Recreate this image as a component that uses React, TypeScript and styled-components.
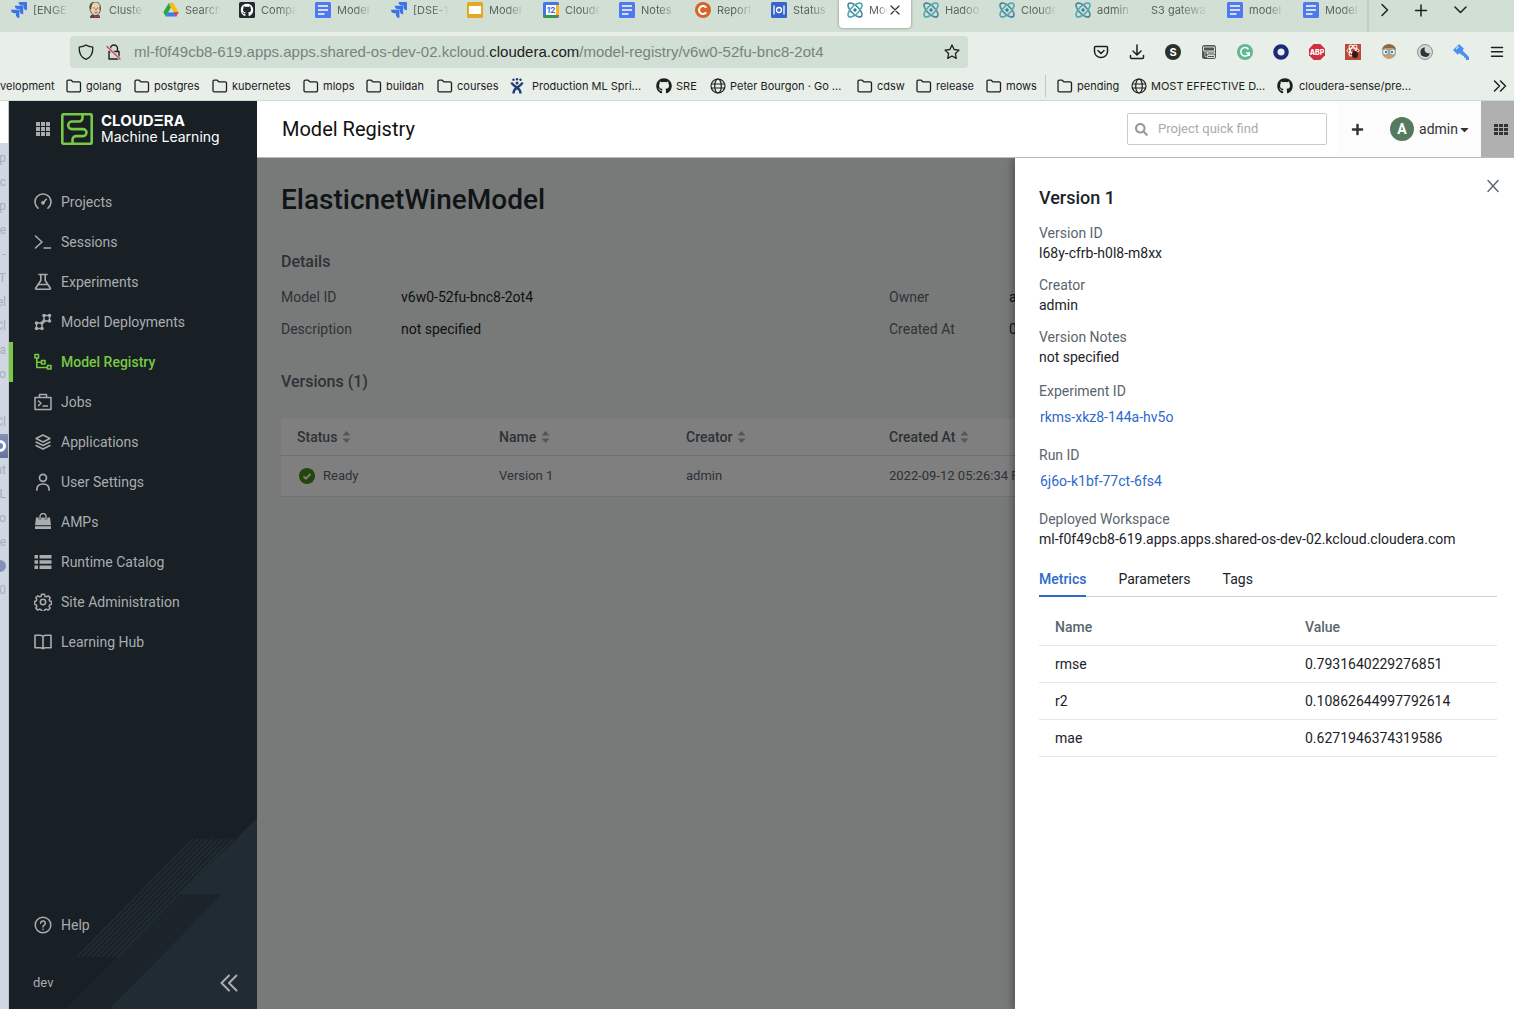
import React from "react";
import styled, { createGlobalStyle, css } from "styled-components";
import { FaGithub, FaSearch, FaPlus, FaCaretDown } from "react-icons/fa";

const GlobalStyle = createGlobalStyle`
  *, *::before, *::after { box-sizing: border-box; }
  body { margin: 0; font-family: Roboto, "Liberation Sans", sans-serif; font-size: 14px; line-height: 20px; color: #1b2329; }
  button, input { font: inherit; color: inherit; }
  button { border: 0; background: none; padding: 0; cursor: pointer; }
  h1, h2, h3, dl, dd, p, ul { margin: 0; padding: 0; }
  ul { list-style: none; }
  a { text-decoration: none; color: inherit; }
  svg { display: block; flex: none; }
`;

const Page = styled.div`
  display: flex;
  flex-direction: column;
  height: 100vh;
  overflow: hidden;
`;

/* ---------- browser chrome ---------- */

const Chrome = styled.header`
  flex: none;
  background: #e8efe8;
  border-bottom: 1px solid #cddcd1;
  font-family: Inter, "Liberation Sans", sans-serif;
  font-size: 11px;
  line-height: 16px;
  color: #1c211e;
`;

const TabStrip = styled.nav`
  display: flex;
  height: 32px;
  padding-left: 3px;
  background: #d1dfd5;
`;

const BrowserTab = styled.a<{ $active?: boolean }>`
  display: flex;
  align-items: center;
  flex: none;
  gap: 6px;
  width: 72px;
  height: 28px;
  margin-right: 4px;
  padding: 0 6px 8px 8px;
  color: #5c655f;
  ${(p) =>
    p.$active &&
    css`
      padding-right: 11px;
      background: #fff;
      border-radius: 0 0 4px 4px;
      box-shadow: 0 0 3px rgba(0, 0, 0, 0.4);
    `}
`;

const TabLabel = styled.span`
  flex: 1;
  overflow: hidden;
  white-space: nowrap;
  mask-image: linear-gradient(to right, #000 50%, transparent 100%);
`;

const TabClose = styled.span`
  margin-left: -4px;
  color: #333;
`;

const StripControls = styled.div`
  display: flex;
  align-items: flex-start;
  gap: 21px;
  height: 32px;
  margin-left: -4px;
  padding: 2px 0 0 8px;
  border-left: 2px solid #c0cdc4;
`;

const Toolbar = styled.div`
  display: flex;
  align-items: center;
  height: 40px;
  padding: 0 9px 0 70px;
`;

const AddressBar = styled.div`
  display: flex;
  align-items: center;
  flex: 1;
  min-width: 0;
  height: 32px;
  margin-right: 125px;
  padding: 0 8px;
  gap: 12px;
  background: #d1dfd5;
  border-radius: 4px;
`;

const Address = styled.div`
  flex: 1;
  overflow: hidden;
  white-space: nowrap;
  font-family: "Liberation Sans", Arial, sans-serif;
  font-size: 15px;
  line-height: 20px;
  color: #78837c;
  b {
    font-weight: 400;
    color: #1c211e;
  }
`;

const Extensions = styled.div`
  display: flex;
  gap: 20px;
`;

const Bookmarks = styled.nav`
  display: flex;
  align-items: center;
  height: 28px;
  padding-right: 6px;
`;

const Bookmark = styled.a<{ $width: number; $gap?: number }>`
  display: flex;
  align-items: center;
  flex: none;
  gap: ${(p) => p.$gap ?? 4}px;
  width: ${(p) => p.$width}px;
  white-space: nowrap;
`;

const BookmarkRule = styled.span`
  width: 1px;
  height: 22px;
  margin-right: 11px;
  background: #bccabf;
`;

const Overflow = styled.button`
  margin-left: auto;
`;

/* ---------- app shell ---------- */

const Shell = styled.div`
  display: flex;
  flex: 1;
  min-height: 0;
`;

const BackWindow = styled.ul`
  flex: none;
  width: 9px;
  overflow: hidden;
  && {
    padding-top: 45px;
  }
  border-right: 1px solid #bfc5cb;
  background: linear-gradient(#fff 42px, #d0d7e2 42px);
  font-size: 12px;
  line-height: 24px;
  color: #a7adb8;
`;

const BackRow = styled.li<{ $selected?: boolean }>`
  display: flex;
  align-items: center;
  justify-content: flex-end;
  height: 24px;
  padding-right: 2px;
  white-space: nowrap;
  ${(p) => p.$selected && "background: linear-gradient(#8490b8, #66739f);"}
`;

const BackBadge = styled.span<{ $light?: boolean }>`
  flex: none;
  width: 12px;
  height: 12px;
  border: ${(p) => (p.$light ? "3px solid #fff" : "6px solid #8390b8")};
  border-radius: 6px;
`;

const Sidebar = styled.aside`
  position: relative;
  display: flex;
  flex-direction: column;
  flex: none;
  width: 248px;
  background: #181f25;
  color: #a9adb0;
`;

const SidebarArt = styled.svg`
  position: absolute;
  right: 0;
  bottom: 0;
`;

const Brand = styled.div`
  display: flex;
  align-items: center;
  gap: 8px;
  height: 56px;
  padding-left: 27px;
  color: #fff;
`;

const AppsButton = styled.button`
  width: 17px;
  color: #a9adb0;
`;

const BrandName = styled.span`
  display: flex;
  flex-direction: column;
  font-family: Inter, sans-serif;
  font-size: 14px;
  line-height: 16px;
  b {
    font-size: 15px;
    font-weight: 700;
  }
`;

const NavList = styled.ul`
  && {
    padding-top: 25px;
  }
`;

const NavLink = styled.a<{ $active?: boolean }>`
  position: relative;
  display: flex;
  align-items: center;
  gap: 9px;
  height: 40px;
  padding-left: 21px;
  border-left: 4px solid ${(p) => (p.$active ? "#78c943" : "transparent")};
  color: ${(p) => (p.$active ? "#78c943" : "inherit")};
  font-weight: ${(p) => (p.$active ? 500 : 400)};
`;

const SidebarFoot = styled.div`
  position: relative;
  margin-top: auto;
`;

const FootRow = styled.div`
  display: flex;
  align-items: center;
  justify-content: space-between;
  height: 64px;
  padding: 12px 19px 0 24px;
  font-size: 13px;
`;

const Workspace = styled.div`
  display: flex;
  flex-direction: column;
  flex: 1;
  min-width: 0;
`;

const TopBar = styled.div`
  display: flex;
  align-items: center;
  flex: none;
  height: 57px;
  padding-left: 25px;
  background: #fff;
  border-bottom: 1px solid #b9bbbb;
`;

const PageTitle = styled.h2`
  flex: 1;
  font-size: 20px;
  line-height: 28px;
  font-weight: 400;
  color: #111;
`;

const SearchBox = styled.label`
  display: flex;
  align-items: center;
  gap: 10px;
  width: 200px;
  height: 32px;
  margin-right: 10px;
  padding: 0 7px;
  border: 1px solid #ccc;
  border-radius: 2px;
  color: #999;
  input {
    width: 100%;
    min-width: 0;
    padding: 0;
    border: 0;
    outline: 0;
    background: none;
    font-size: 13px;
    color: #333;
  }
  input::placeholder {
    color: #aaa;
    opacity: 1;
  }
`;

const UserArea = styled.div`
  display: flex;
  align-items: center;
  gap: 26px;
  height: 56px;
  padding: 0 10px 0 14px;
  background: #fcfcfc;
  color: #333;
`;

const UserButton = styled.button`
  display: flex;
  align-items: center;
`;

const Avatar = styled.span`
  width: 24px;
  margin-right: 5px;
  border-radius: 12px;
  background: #567a60;
  color: #fff;
  font-weight: 700;
  line-height: 24px;
  text-align: center;
`;

const PanelButton = styled.button`
  display: flex;
  align-items: center;
  justify-content: flex-end;
  width: 33px;
  height: 56px;
  padding-right: 6px;
  background: #b0b0b0;
  color: #333;
`;

/* ---------- model page ---------- */

const Stage = styled.div`
  position: relative;
  flex: 1;
  min-height: 0;
  overflow: hidden;
  background: #f1f5f3;
`;

const Model = styled.main`
  padding: 22px 17px 0 24px;
`;

const ModelName = styled.h1`
  font-size: 28px;
  line-height: 40px;
  font-weight: 500;
  color: #23292e;
`;

const SectionTitle = styled.h3`
  margin-top: 30px;
  font-size: 16px;
  line-height: 24px;
  font-weight: 500;
  color: #5a656d;
`;

const Details = styled.dl`
  display: grid;
  grid-template-columns: 1fr 1fr;
  row-gap: 12px;
  && {
    padding: 13px 0 1px;
  }
`;

const Detail = styled.div`
  display: flex;
  dt {
    width: 120px;
    color: #5a656d;
  }
`;

const VersionTable = styled.table`
  width: 100%;
  margin-top: 25px;
  border-collapse: collapse;
  table-layout: fixed;
  background: #fff;
  color: #5a656d;
  th,
  td {
    padding: 0 16px;
    text-align: left;
    border-bottom: 1px solid #dde2e2;
    white-space: nowrap;
  }
  th {
    height: 36px;
    font-weight: 500;
  }
  td {
    height: 41px;
    font-size: 13px;
  }
`;

const SortButton = styled.button`
  display: flex;
  align-items: center;
  gap: 5px;
  font-weight: 500;
`;

const Ready = styled.span`
  display: flex;
  align-items: center;
  gap: 7px;
  padding-left: 1px;
`;

const Scrim = styled.div`
  position: absolute;
  inset: 0;
  background: rgba(0, 0, 0, 0.5);
`;

const Drawer = styled.section`
  position: absolute;
  top: 0;
  right: 0;
  bottom: 0;
  width: 499px;
  padding: 28px 17px 0 24px;
  background: #fff;
  box-shadow: -2px 0 8px rgba(0, 0, 0, 0.35);
`;

const DrawerTitle = styled.h2`
  margin-bottom: 13px;
  font-size: 18px;
  line-height: 24px;
  font-weight: 500;
`;

const CloseButton = styled.button`
  position: absolute;
  top: 20px;
  right: 13px;
  color: #5a656d;
`;

const Fields = styled.dl`
  display: flex;
  flex-direction: column;
  gap: 12px;
  & + & {
    margin-top: 14px;
  }
  dt {
    color: #5a656d;
  }
`;

const FieldLink = styled.a`
  display: block;
  padding-left: 1px;
  line-height: 32px;
  color: #2e69cc;
`;

const Tabs = styled.div`
  display: flex;
  gap: 32px;
  margin-top: 20px;
  box-shadow: inset 0 -1px #cdd0d3;
`;

const Tab = styled.button<{ $active?: boolean }>`
  padding-bottom: 6px;
  border-bottom: 2px solid ${(p) => (p.$active ? "#2e69cc" : "transparent")};
  font-weight: ${(p) => (p.$active ? 500 : 400)};
  color: ${(p) => (p.$active ? "#2e69cc" : "inherit")};
`;

const MetricTable = styled.table`
  width: 100%;
  margin-top: 12px;
  border-collapse: collapse;
  table-layout: fixed;
  th,
  td {
    height: 37px;
    padding: 0 16px;
    text-align: left;
    border-bottom: 1px solid #e4e6e8;
  }
  th {
    height: 36px;
    font-weight: 500;
    color: #5a656d;
  }
`;

/* ---------- drawings ---------- */

const Jira = () => (
  <svg width="16" height="16" viewBox="0 0 24 24" fill="#3b73e8">
    <path d="M11.57 11.51H0a5.22 5.22 0 0 0 5.23 5.22h2.13v2.06A5.22 5.22 0 0 0 12.58 24V12.52a1 1 0 0 0-1-1z" />
    <path d="M17.3 5.76H5.74a5.22 5.22 0 0 0 5.21 5.21h2.13v2.06a5.22 5.22 0 0 0 5.22 5.21V6.76a1 1 0 0 0-1-1z" />
    <path d="M23.01 0H11.46a5.22 5.22 0 0 0 5.21 5.22h2.13v2.05A5.22 5.22 0 0 0 24 12.48V1a1 1 0 0 0-1-1z" />
  </svg>
);

const Jenkins = () => (
  <svg width="16" height="16" viewBox="0 0 16 16">
    <path d="M3 16c0-3 2-4 5-4s5 1 5 4z" fill="#3e4a55" />
    <path d="M3 6c0-4 2-6 5-6 3.500 0 5.500 2 5.500 6S11.500 13.500 8.500 13.500 3 10 3 6z" fill="#eccfae" stroke="#4d4038" strokeWidth=".8" />
    <path d="M3 7C1.500 3 4 0 7 .3 5 1.500 4.500 4 4.300 7zM12.500 4c1 1 1.300 3 .8 5l-1-2z" fill="#5c4b40" />
    <path d="M6.500 6h1M10 6h1M7.500 10.300c1 .7 2 .6 3 0M9 6.500v2" stroke="#4d4038" strokeWidth=".9" fill="none" />
    <path d="M7 13l2.500 1.200L12.500 13v3l-3-1-2.500 1z" fill="#c9302c" />
  </svg>
);

const Drive = () => (
  <svg width="16" height="16" viewBox="0 0 16 16">
    <path d="M5.500 1.500h5l-5.200 9L2.800 14.500.3 10.300z" fill="#2ba24c" />
    <path d="M5.500 1.500h5l5.200 9h-5z" fill="#fbbc05" />
    <path d="M5.300 10.300h10.400L13.200 14.500H2.800z" fill="#3c7ded" />
    <path d="M10.700 10.300h5L13.200 14.500z" fill="#ea4335" />
    <path d="M8 5.800l2.700 4.500H5.300z" fill="#d1dfd5" />
  </svg>
);

const GithubTile = () => (
  <svg width="16" height="16" viewBox="0 0 16 16">
    <rect width="16" height="16" rx="1.500" fill="#24292e" />
    <g transform="translate(1.500 1.500)" color="#fff">
      <FaGithub size={13} />
    </g>
  </svg>
);

const Doc = () => (
  <svg width="16" height="16" viewBox="0 0 16 16">
    <rect width="16" height="16" rx="1.500" fill="#4f79ee" />
    <path d="M3 4h10M3 8h10M3 12h6.500" stroke="#fff" strokeWidth="1.700" />
  </svg>
);

const Slides = () => (
  <svg width="16" height="16" viewBox="0 0 16 16">
    <rect width="16" height="16" rx="1.500" fill="#e2a924" />
    <rect x="2" y="4" width="12" height="8" fill="#fff" />
  </svg>
);

const CalendarIcon = () => (
  <svg width="16" height="16" viewBox="0 0 16 16">
    <rect width="16" height="16" rx="1.500" fill="#3f78e8" />
    <path d="M13 3h3v10h-3z" fill="#f6b91b" />
    <path d="M0 13h13v3H1.500L0 14.500z" fill="#2f9a4d" />
    <path d="M13 13h3l-3 3z" fill="#e24a3b" />
    <rect x="3" y="3" width="10" height="10" fill="#fff" />
    <text x="8" y="11" fontSize="8" fontWeight="700" textAnchor="middle" fill="#3f68d8">12</text>
  </svg>
);

const Confluent = () => (
  <svg width="16" height="16" viewBox="0 0 16 16">
    <circle cx="8" cy="8" r="8" fill="#d6652b" />
    <path d="M11.300 5.700a4 4 0 1 0 0 4.600" fill="none" stroke="#fff" strokeWidth="2" />
  </svg>
);

const StatusTile = () => (
  <svg width="16" height="16" viewBox="0 0 16 16">
    <rect width="16" height="16" rx="1.500" fill="#3765cc" />
    <circle cx="8" cy="8" r="2.500" fill="none" stroke="#fff" strokeWidth="1.300" />
    <path d="M3 3.500v9M13 3.500v9" stroke="#fff" strokeWidth="1.300" />
  </svg>
);

const Atom = () => (
  <svg width="16" height="16" viewBox="0 0 16 16" fill="none" strokeWidth="1.500">
    <ellipse cx="8" cy="8" rx="9" ry="4" transform="rotate(45 8 8)" stroke="#3f7f9c" />
    <ellipse cx="8" cy="8" rx="9" ry="4" transform="rotate(-45 8 8)" stroke="#4aa5ad" />
    <path d="M5 1.500L8 4l3-2.500M5 14.500L8 12l3 2.500M1.500 5L4 8l-2.500 3M14.500 5L12 8l2.500 3" stroke="#5fb3b6" strokeWidth="1" />
    <circle cx="8" cy="8" r="1.700" fill="#3a7c98" />
  </svg>
);

type LineProps = { size?: number; w?: number; children: React.ReactNode };
const Line = ({ size = 16, w = 1.4, children }: LineProps) => (
  <svg width={size} height={size} viewBox={`0 0 ${size} ${size}`} fill="none" stroke="currentColor" strokeWidth={w} strokeLinecap="round" strokeLinejoin="round">
    {children}
  </svg>
);

const Folder = () => (
  <Line w={1.3}>
    <path d="M1 12.500V3.500a1.300 1.300 0 0 1 1.300-1.300h2.900l1.600 1.600h6.400a1.300 1.300 0 0 1 1.300 1.300v7.400a1.300 1.300 0 0 1-1.300 1.300H2.300A1.300 1.300 0 0 1 1 12.500z" />
  </Line>
);

const Globe = () => (
  <Line w={1.2}>
    <circle cx="8" cy="8" r="7" />
    <ellipse cx="8" cy="8" rx="3.300" ry="7" />
    <path d="M1.500 6h13M1.500 10h13" />
  </Line>
);

const JiraOld = () => (
  <svg width="16" height="16" viewBox="0 0 16 16" fill="none" stroke="#233a78" strokeWidth="2.400">
    <path d="M2.500 4.500c.5 2 2.500 3 5.500 5 2.500 1.700 3.500 3.500 3.500 6M13.500 4.500c-.5 2-2.500 3-5.500 5-2.500 1.700-3.500 3.500-3.500 6" />
    <g fill="#233a78" stroke="none">
      <circle cx="4.500" cy="1.800" r="1.200" />
      <circle cx="8" cy="1.200" r="1.200" />
      <circle cx="11.500" cy="1.800" r="1.200" />
      <circle cx="8" cy="5" r="1.500" />
    </g>
  </svg>
);

const Shield = () => (
  <Line w={1.3}>
    <path d="M8 1C6 2.500 3.500 3 1.200 3.200 1 8.500 3 13.500 8 15.300c5-1.800 7-6.800 6.800-12.100C12.500 3 10 2.500 8 1z" />
  </Line>
);

const Unlocked = () => (
  <Line w={1.4}>
    <path d="M4.500 7.500V4.500a3.500 3.500 0 0 1 7 0v3M3 7.500h10v7.500H3z" />
    <path d="M1 2.500l13 12.500" stroke="#d1dfd5" strokeWidth="3" />
    <path d="M1 2.500l13 12.500" stroke="#d9415a" />
  </Line>
);

const Star = () => (
  <Line w={1.3}>
    <path d="M8 1l2.100 4.500 4.900.6-3.600 3.400.9 4.900L8 12l-4.300 2.400.9-4.900L1 6.100l4.900-.6z" />
  </Line>
);

const Grid9 = () => (
  <svg width="14" height="14" viewBox="0 0 14 14" fill="currentColor">
    {[0, 5, 10].map((y) => [0, 5, 10].map((x) => <rect key={`${x}-${y}`} x={x} y={y} width="4" height="4" />))}
  </svg>
);

const Grid9Wide = () => (
  <svg width="14" height="11" viewBox="0 0 14 11" fill="currentColor">
    {[0, 4, 8].map((y) => [0, 5, 10].map((x) => <rect key={`${x}-${y}`} x={x} y={y} width="4" height="3" />))}
  </svg>
);

const ClouderaMark = () => (
  <svg width="32" height="32" viewBox="0 0 32 32" fill="none" stroke="#78c943" strokeWidth="2.600">
    <rect x="1.300" y="1.300" width="29.400" height="29.400" rx="1" />
    <path d="M21.500 1.500v3.500a3.500 3.500 0 0 1-3.500 3.500h-7a3.800 3.800 0 0 0 0 7.600h11a3.500 3.500 0 0 1 3.500 3.500v0a3.500 3.500 0 0 1-3.500 3.500h-7a3.500 3.500 0 0 0-3.500 3.500v4" />
  </svg>
);

const navIcons: Record<string, React.ReactNode> = {
  Projects: (
    <Line size={18} w={1.6}>
      <path d="M4 15.200a8 8 0 1 1 10 0M9.500 9.300l2.800-3" />
      <circle cx="9" cy="9.800" r="1.100" fill="currentColor" />
    </Line>
  ),
  Sessions: (
    <Line size={18} w={1.6}>
      <path d="M1.500 3l6.500 6-6.500 6M10 15h6.500" />
    </Line>
  ),
  Experiments: (
    <Line size={18} w={1.6}>
      <path d="M5 1.500h8M6.800 1.500v6L1.800 15c-.5.800-.2 1.200.5 1.200h13.400c.7 0 1-.4.500-1.200l-5-7.500v-6M5 11.500h8" />
    </Line>
  ),
  "Model Deployments": (
    <Line size={18} w={1.4}>
      <path d="M10 2.500h5.500V8H10zM2.500 10H8v5.500H2.500zM8 10l2-2" />
      <g fill="currentColor" stroke="none">
        {[[10, 2.5], [15.5, 2.5], [10, 8], [15.5, 8], [2.5, 10], [8, 10], [2.5, 15.5], [8, 15.5]].map(([x, y]) => (
          <circle key={`${x}-${y}`} cx={x} cy={y} r="1.800" />
        ))}
      </g>
    </Line>
  ),
  "Model Registry": (
    <Line size={18} w={1.6}>
      <path d="M1 1.500h3.500V5H1zM7.500 7.500H11V11H7.500zM13.500 12.500H17V16h-3.500zM2.800 5v9.500h10.500M2.800 9.200h4.500" />
    </Line>
  ),
  Jobs: (
    <Line size={18} w={1.5}>
      <path d="M1 4.500h16v12H1zM5.500 4.500v-3h7v3M4.500 8l2.500 2.300-2.500 2.300M9 13h4.500" />
    </Line>
  ),
  Applications: (
    <Line size={18} w={1.4}>
      <path d="M9 2l7 3.500L9 9 2 5.500zM2 9l7 3.500L16 9M2 12.500L9 16l7-3.500" />
    </Line>
  ),
  "User Settings": (
    <Line size={18} w={1.7}>
      <circle cx="9" cy="4.800" r="3.500" />
      <path d="M2.800 17c0-4 2.500-6 6.200-6s6.200 2 6.200 6" />
    </Line>
  ),
  AMPs: (
    <svg width="18" height="18" viewBox="0 0 18 18" fill="currentColor">
      <path d="M2 4.500h14l1 7.800H1zM1 13.300h16v2.700H1z" />
      <path d="M6 6.500V3.500a3 3 0 0 1 6 0v3" fill="none" stroke="#181f25" strokeWidth="2.600" />
      <path d="M6 6.500V3.500a3 3 0 0 1 6 0v3" fill="none" stroke="currentColor" strokeWidth="1.400" />
    </svg>
  ),
  "Runtime Catalog": (
    <svg width="18" height="18" viewBox="0 0 18 18" fill="currentColor">
      <path d="M.5 2h3.500v3.500H.5zM.5 7.200h3.500v3.500H.5zM.5 12.500h3.500V16H.5zM5.500 2h12v3.500h-12zM5.500 7.200h12v3.500h-12zM5.500 12.500h12V16h-12z" />
    </svg>
  ),
  "Site Administration": (
    <Line size={18} w={1.5}>
      <circle cx="9" cy="9" r="2.700" />
      <path d="M7.600 1.200h2.800l.5 2 1.500.6 1.800-1 2 2-1 1.800.6 1.500 1.600.4v2.900l-1.700.5-.6 1.500 1 1.800-2 1.900-1.800-1-1.500.6-.5 1.600H7.600l-.5-1.600-1.500-.6-1.800 1-2-2 1-1.700-.6-1.500-1.600-.5V8.500l1.600-.5.6-1.500-1-1.800 2-1.900 1.800 1 1.500-.6z" />
    </Line>
  ),
  "Learning Hub": (
    <Line size={18} w={1.6}>
      <path d="M9 3.500C8 2.500 7 2.300 5.500 2.300H1v12.400h5c1.500 0 2.300.3 3 1 .7-.7 1.500-1 3-1h5V2.300h-4.500C11 2.300 10 2.500 9 3.500zM9 3.500v12" />
    </Line>
  ),
};

const HelpIcon = () => (
  <Line size={18} w={1.5}>
    <circle cx="9" cy="9" r="7.800" />
    <path d="M6.700 7.200a2.300 2.300 0 1 1 3.500 2c-.8.500-1.200.8-1.200 1.800M9 13.200v.2" />
  </Line>
);

const SortArrows = () => (
  <svg width="9" height="14" viewBox="0 0 9 14" fill="#a9adb0">
    <path d="M4.500 1l4 4.500h-8zM4.500 13l4-4.500h-8z" />
  </svg>
);

const CheckDot = () => (
  <svg width="18" height="18" viewBox="0 0 18 18">
    <circle cx="9" cy="9" r="8" fill="#4a8a1c" />
    <path d="M5.500 9.300l2.400 2.400 4.600-4.900" fill="none" stroke="#fff" strokeWidth="1.800" />
  </svg>
);

const stripes = Array.from({ length: 9 }, (_, i) => i * 5);

/* ---------- data ---------- */

const browserTabs: { icon?: React.ReactNode; label: string; active?: boolean }[] = [
  { icon: <Jira />, label: "[ENGE" },
  { icon: <Jenkins />, label: "Cluste" },
  { icon: <Drive />, label: "Search" },
  { icon: <GithubTile />, label: "Compa" },
  { icon: <Doc />, label: "Model" },
  { icon: <Jira />, label: "[DSE-1" },
  { icon: <Slides />, label: "Model" },
  { icon: <CalendarIcon />, label: "Cloude" },
  { icon: <Doc />, label: "Notes" },
  { icon: <Confluent />, label: "Report" },
  { icon: <StatusTile />, label: "Status" },
  { icon: <Atom />, label: "Mod", active: true },
  { icon: <Atom />, label: "Hadoo" },
  { icon: <Atom />, label: "Cloude" },
  { icon: <Atom />, label: "admin" },
  { label: "S3 gatewa" },
  { icon: <Doc />, label: "model" },
  { icon: <Doc />, label: "Model" },
];

const bookmarks: { icon?: React.ReactNode; label: string; width: number; gap?: number; rule?: boolean }[] = [
  { label: "velopment", width: 66 },
  { icon: <Folder />, label: "golang", width: 68 },
  { icon: <Folder />, label: "postgres", width: 78 },
  { icon: <Folder />, label: "kubernetes", width: 91 },
  { icon: <Folder />, label: "mlops", width: 63 },
  { icon: <Folder />, label: "buildah", width: 71 },
  { icon: <Folder />, label: "courses", width: 72 },
  { icon: <JiraOld />, label: "Production ML Spri...", width: 147, gap: 7 },
  { icon: <FaGithub size={16} />, label: "SRE", width: 54 },
  { icon: <Globe />, label: "Peter Bourgon · Go ...", width: 147 },
  { icon: <Folder />, label: "cdsw", width: 59 },
  { icon: <Folder />, label: "release", width: 70 },
  { icon: <Folder />, label: "mows", width: 59 },
  { icon: <Folder />, label: "pending", width: 74, rule: true },
  { icon: <Globe />, label: "MOST EFFECTIVE D...", width: 146 },
  { icon: <FaGithub size={16} />, label: "cloudera-sense/pre...", width: 150, gap: 6 },
];

const extensions: [string, React.ReactNode][] = [
  ["Pocket", <Line key="i" w={1.5}><path d="M1.500 3.500c0-.8.500-1 1-1h11c.5 0 1 .2 1 1V7.500a6.500 6 0 0 1-13 0zM5 6.500l3 3 3-3" /></Line>],
  ["Downloads", <Line key="i" w={1.5}><path d="M8 1v9.500M4 7l4 4 4-4M1.500 11.500v2c0 .6.400 1 1 1h11c.6 0 1-.4 1-1v-2" /></Line>],
  ["Stylus", <svg key="i" width="16" height="16"><circle cx="8" cy="8" r="8" fill="#2b2f2d" /><text x="8" y="12" fontSize="11" fontWeight="700" textAnchor="middle" fill="#fff">S</text></svg>],
  ["Reader", <svg key="i" width="16" height="16" fill="none"><rect x="1" y="1" width="14" height="14" rx="2.500" fill="#515653" /><path d="M2.500 3h11v4h-11zM6.500 8h7v2h-7zM6.500 11.500h7v2h-7z" stroke="#e8efe8" strokeWidth=".9" /><path d="M4 7v5.500h2.500M4 9h2.500" stroke="#b9bfba" strokeWidth=".8" /></svg>],
  ["Grammarly", <svg key="i" width="16" height="16" fill="none"><circle cx="8" cy="8" r="8" fill="#62b893" /><path d="M11.500 5.200a4.300 4.300 0 1 0 .7 3.800H9M12.200 9v3" stroke="#fff" strokeWidth="1.500" /></svg>],
  ["Okta", <svg key="i" width="16" height="16" fill="none"><circle cx="8" cy="8" r="5.700" stroke="#1b2a78" strokeWidth="4.200" /></svg>],
  ["Adblock", <svg key="i" width="16" height="16"><path d="M4.700 0h6.600L16 4.700v6.600L11.300 16H4.700L0 11.300V4.700z" fill="#cf2f3f" /><text x="8" y="11" fontSize="7" fontWeight="800" textAnchor="middle" fill="#fff">ABP</text></svg>],
  ["React tools", <svg key="i" width="16" height="16" fill="none"><rect width="16" height="16" fill="#b94a35" /><g stroke="#fff"><ellipse cx="8" cy="6.500" rx="6" ry="2.500" /><ellipse cx="8" cy="6.500" rx="6" ry="2.500" transform="rotate(60 8 6.500)" /><ellipse cx="8" cy="6.500" rx="6" ry="2.500" transform="rotate(120 8 6.500)" /></g><ellipse cx="10" cy="10.500" rx="3" ry="3.500" fill="#2b1a18" /></svg>],
  ["Profile", <svg key="i" width="16" height="16"><circle cx="8" cy="8" r="7" fill="#d49a6a" /><path d="M1 6a7 6 0 0 1 14 0l-3-2H4z" fill="#8a6a45" /><circle cx="4.500" cy="8" r="3" fill="#e7f3f7" stroke="#6fa6b5" /><circle cx="11.500" cy="8" r="3" fill="#e7f3f7" stroke="#6fa6b5" /><circle cx="5" cy="8" r="1" fill="#345" /><circle cx="11" cy="8" r="1" fill="#345" /></svg>],
  ["Night mode", <svg key="i" width="16" height="16"><circle cx="8" cy="8" r="7.500" fill="#d4d6d8" stroke="#8c9090" /><path d="M8 3.500A4.700 4.700 0 1 0 12.800 9 3.900 3.900 0 0 1 8 3.500z" fill="#303435" /></svg>],
  ["Keys", <svg key="i" width="16" height="16"><path d="M6 0L0 6l4.500 4.500L7 9.300l2 2.200 1.700.2.300 1.800 1.700.3.300 2.200h3v-3L9.800 6.700l.9-2.200z" fill="#4a90ee" /><path d="M3 5l2.500-2.500" stroke="#cfe2fb" strokeWidth="1.300" /></svg>],
  ["Menu", <Line key="i" w={1.5}><path d="M2.500 3.500h11M2.500 7.800h11M2.500 12.200h11" /></Line>],
];

const backRows = ["up", "oc", "Op", "e", "-", "T", "el", "Cl", "a", "o", "", "Cl", "*", "nt", "L", "lo", "e", "#", "0"];

const metrics = [
  ["rmse", "0.7931640229276851"],
  ["r2", "0.10862644997792614"],
  ["mae", "0.6271946374319586"],
];

/* ---------- parts ---------- */

const BrowserChrome = () => (
  <Chrome>
    <TabStrip>
      {browserTabs.map((t, i) => (
        <BrowserTab key={i} href="#" $active={t.active}>
          {t.icon}
          <TabLabel>{t.label}</TabLabel>
          {t.active && (
            <TabClose>
              <Line size={10} w={1.2}>
                <path d="M1 1l8 8M9 1L1 9" />
              </Line>
            </TabClose>
          )}
        </BrowserTab>
      ))}
      <StripControls>
        <button aria-label="Scroll tabs"><Line w={1.5}><path d="M5 2.500L10.500 8 5 13.500" /></Line></button>
        <button aria-label="New tab"><Line w={1.5}><path d="M7 3v11M1.500 8.500h11" /></Line></button>
        <button aria-label="List tabs"><Line w={1.5}><path d="M4 5l5.500 5.500L15 5" /></Line></button>
      </StripControls>
    </TabStrip>
    <Toolbar>
      <AddressBar>
        <Shield />
        <Unlocked />
        <Address role="textbox" aria-label="Address">
          ml-f0f49cb8-619.apps.apps.shared-os-dev-02.kcloud.<b>cloudera.com</b>/model-registry/v6w0-52fu-bnc8-2ot4
        </Address>
        <button aria-label="Bookmark this page"><Star /></button>
      </AddressBar>
      <Extensions>
        {extensions.map(([name, icon]) => (
          <button key={name} aria-label={name}>{icon}</button>
        ))}
      </Extensions>
    </Toolbar>
    <Bookmarks>
      {bookmarks.map((b) => (
        <React.Fragment key={b.label}>
          {b.rule && <BookmarkRule />}
          <Bookmark href="#" $width={b.width} $gap={b.gap}>
            {b.icon}
            {b.label}
          </Bookmark>
        </React.Fragment>
      ))}
      <Overflow aria-label="More bookmarks"><Line w={1.5}><path d="M2.500 3l5 5-5 5M8.500 3l5 5-5 5" /></Line></Overflow>
    </Bookmarks>
  </Chrome>
);

const SideNav = () => (
  <Sidebar>
    <SidebarArt width="191" height="191" viewBox="0 0 191 191">
      <path d="M191 0L114 76h42L43 191h148z" fill="#202b34" />
      <path d="M114 76h42L43 191H0z" fill="#1b2529" />
      <g stroke="#202b32" strokeWidth="2">
        {stripes.map((x) => (
          <path key={x} d={`M${127 + x} 21L${11 + x} 139`} />
        ))}
      </g>
    </SidebarArt>
    <Brand>
      <AppsButton aria-label="Apps"><Grid9 /></AppsButton>
      <ClouderaMark />
      <BrandName>
        <b>CLOUDΞRA</b>
        Machine Learning
      </BrandName>
    </Brand>
    <NavList>
      {Object.keys(navIcons).map((name) => (
        <li key={name}>
          <NavLink href="#" $active={name === "Model Registry"}>
            {navIcons[name]}
            {name}
          </NavLink>
        </li>
      ))}
    </NavList>
    <SidebarFoot>
      <NavLink href="#"><HelpIcon />Help</NavLink>
      <FootRow>
        dev
        <button aria-label="Collapse sidebar"><Line size={18} w={2}><path d="M9 1.500L1.500 9 9 16.500M16.500 1.500L9 9l7.500 7.500" /></Line></button>
      </FootRow>
    </SidebarFoot>
  </Sidebar>
);

const ModelPage = () => (
  <Model>
    <ModelName>ElasticnetWineModel</ModelName>
    <SectionTitle>Details</SectionTitle>
    <Details>
      <Detail><dt>Model ID</dt><dd>v6w0-52fu-bnc8-2ot4</dd></Detail>
      <Detail><dt>Owner</dt><dd>admin</dd></Detail>
      <Detail><dt>Description</dt><dd>not specified</dd></Detail>
      <Detail><dt>Created At</dt><dd>09/12/2022</dd></Detail>
    </Details>
    <SectionTitle>Versions (1)</SectionTitle>
    <VersionTable>
      <colgroup>
        <col width="202" />
        <col width="187" />
        <col width="203" />
        <col />
      </colgroup>
      <thead>
        <tr>
          {["Status", "Name", "Creator", "Created At"].map((h) => (
            <th key={h}><SortButton>{h}<SortArrows /></SortButton></th>
          ))}
        </tr>
      </thead>
      <tbody>
        <tr>
          <td><Ready><CheckDot />Ready</Ready></td>
          <td>Version 1</td>
          <td>admin</td>
          <td>2022-09-12 05:26:34 PM</td>
        </tr>
      </tbody>
    </VersionTable>
  </Model>
);

const VersionDrawer = () => (
  <Drawer aria-label="Version 1">
    <CloseButton aria-label="Close"><Line w={1.4}><path d="M3 2.500l10 11M13 2.500L3 13.500" /></Line></CloseButton>
    <DrawerTitle>Version 1</DrawerTitle>
    <Fields>
      <div><dt>Version ID</dt><dd>l68y-cfrb-h0l8-m8xx</dd></div>
      <div><dt>Creator</dt><dd>admin</dd></div>
      <div><dt>Version Notes</dt><dd>not specified</dd></div>
    </Fields>
    <Fields>
      <div><dt>Experiment ID</dt><dd><FieldLink href="#">rkms-xkz8-144a-hv5o</FieldLink></dd></div>
      <div><dt>Run ID</dt><dd><FieldLink href="#">6j6o-k1bf-77ct-6fs4</FieldLink></dd></div>
      <div><dt>Deployed Workspace</dt><dd>ml-f0f49cb8-619.apps.apps.shared-os-dev-02.kcloud.cloudera.com</dd></div>
    </Fields>
    <Tabs role="tablist">
      <Tab role="tab" aria-selected $active>Metrics</Tab>
      <Tab role="tab">Parameters</Tab>
      <Tab role="tab">Tags</Tab>
    </Tabs>
    <MetricTable>
      <colgroup>
        <col width="250" />
        <col />
      </colgroup>
      <thead>
        <tr><th>Name</th><th>Value</th></tr>
      </thead>
      <tbody>
        {metrics.map(([name, value]) => (
          <tr key={name}><td>{name}</td><td>{value}</td></tr>
        ))}
      </tbody>
    </MetricTable>
  </Drawer>
);

export default function App() {
  return (
    <>
      <GlobalStyle />
      <Page>
        <BrowserChrome />
        <Shell>
          <BackWindow aria-hidden>
            {backRows.map((r, i) => (
              <BackRow key={i} $selected={r === "*"}>
                {r === "*" || r === "#" ? <BackBadge $light={r === "*"} /> : r}
              </BackRow>
            ))}
          </BackWindow>
          <SideNav />
          <Workspace>
            <TopBar>
              <PageTitle>Model Registry</PageTitle>
              <SearchBox>
                <FaSearch size={13} />
                <input aria-label="Project quick find" placeholder="Project quick find" />
              </SearchBox>
              <UserArea>
                <button aria-label="Add"><FaPlus size={13} /></button>
                <UserButton>
                  <Avatar>A</Avatar>
                  admin
                  <FaCaretDown size={13} />
                </UserButton>
              </UserArea>
              <PanelButton aria-label="Panel"><Grid9Wide /></PanelButton>
            </TopBar>
            <Stage>
              <ModelPage />
              <Scrim />
              <VersionDrawer />
            </Stage>
          </Workspace>
        </Shell>
      </Page>
    </>
  );
}
